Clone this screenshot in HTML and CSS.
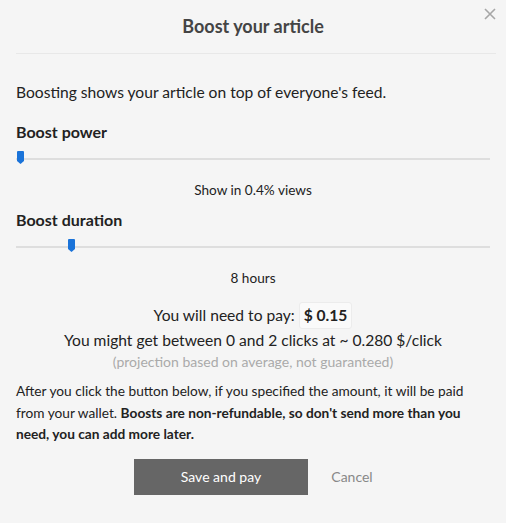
FILE: index.html
```html
<!doctype html>
<html lang="en">
 <head>
	<meta charset="UTF-8">
	<title>Boost your article</title>
	<link rel="stylesheet" href="styles.css">
 </head>
 <body>
	<div class="modal">
		<div class="head">
			<h2>Boost your article</h2>
			<svg class="close" width="12" height="12" viewBox="0 0 12 12"><path d="M1 1l10 10M11 1l-10 10" stroke="#a6a6a6" stroke-width="1.6"/></svg>
		</div>
		<div class="body">
			<p class="intro">Boosting shows your article on top of everyone's feed.</p>
			<h3>Boost power</h3>
			<div class="slider">
				<div class="track"></div>
				<svg class="thumb" style="left:1px" width="7" height="13" viewBox="0 0 7 13"><path d="M1 0h5a1 1 0 0 1 1 1v9l-3.5 3l-3.5-3v-9a1 1 0 0 1 1-1z" fill="#1a73d9"/></svg>
			</div>
			<p class="note">Show in 0.4% views</p>
			<h3 class="second">Boost duration</h3>
			<div class="slider">
				<div class="track"></div>
				<svg class="thumb" style="left:52px" width="7" height="13" viewBox="0 0 7 13"><path d="M1 0h5a1 1 0 0 1 1 1v9l-3.5 3l-3.5-3v-9a1 1 0 0 1 1-1z" fill="#1a73d9"/></svg>
			</div>
			<p class="note">8 hours</p>
			<div class="pay">
				<p>You will need to pay: <span class="amount">$ 0.15</span></p>
				<p>You might get between 0 and 2 clicks at ~ 0.280 $/click</p>
				<p class="proj">(projection based on average, not guaranteed)</p>
			</div>
			<p class="warn">After you click the button below, if you specified the amount, it will be paid from your wallet. <b>Boosts are non-refundable, so don't send more than you need, you can add more later.</b></p>
			<div class="actions">
				<button class="save">Save and pay</button>
				<button class="cancel">Cancel</button>
			</div>
		</div>
	</div>
 </body>
</html>
```

FILE: styles.css
```css
*{
	padding:0;
	margin:0;
	box-sizing:border-box;
}
body{
	background:#f5f5f5;
	font-family:Lato,'Liberation Sans',sans-serif;
	color:#222;
}
.modal{
	width:506px;
	height:523px;
}
.head{
	position:relative;
	margin:0 10px 0 16px;
	height:54px;
	border-bottom:1px solid #e8e8e8;
	text-align:center;
}
.head h2{
	font-size:18px;
	font-weight:700;
	color:#444;
	line-height:53px;
	padding-right:6px;
}
.close{
	position:absolute;
	right:0;
	top:8px;
}
.body{
	padding:0 16px;
}
.intro{
	font-size:15.6px;
	margin-top:28px;
	line-height:20px;
}
h3{
	font-size:16px;
	font-weight:700;
	margin-top:19px;
	line-height:22px;
}
h3.second{
	margin-top:10px;
}
.slider{
	position:relative;
	height:18px;
	margin-top:6px;
}
.track{
	position:absolute;
	left:0;
	right:0;
	top:9px;
	height:2px;
	background:#dedede;
}
.thumb{
	position:absolute;
	top:2px;
}
.note{
	text-align:center;
	font-size:13.6px;
	line-height:18px;
	margin-top:14px;
}
.pay{
	text-align:center;
	margin-top:15px;
	font-size:15.6px;
}
.pay p{
	line-height:23px;
}
.amount{
	display:inline-block;
	font-weight:700;
	padding:0 4px;
	line-height:25px;
	background:#fafafa;
	border:1px solid #ececec;
	border-radius:3px;
}
.pay p.proj{
	font-size:14px;
	color:#aaa;
	line-height:20px;
}
.warn{
	font-size:13.7px;
	line-height:21.5px;
	margin-top:8px;
}
.actions{
	display:flex;
	align-items:center;
	margin-top:14px;
	padding-left:118px;
}
.save{
	width:174px;
	height:36px;
	background:#666;
	color:#fff;
	border:none;
	font-family:inherit;
	font-size:14px;
}
.cancel{
	width:88px;
	height:36px;
	background:none;
	border:none;
	color:#888;
	font-family:inherit;
	font-size:14px;
}
```
